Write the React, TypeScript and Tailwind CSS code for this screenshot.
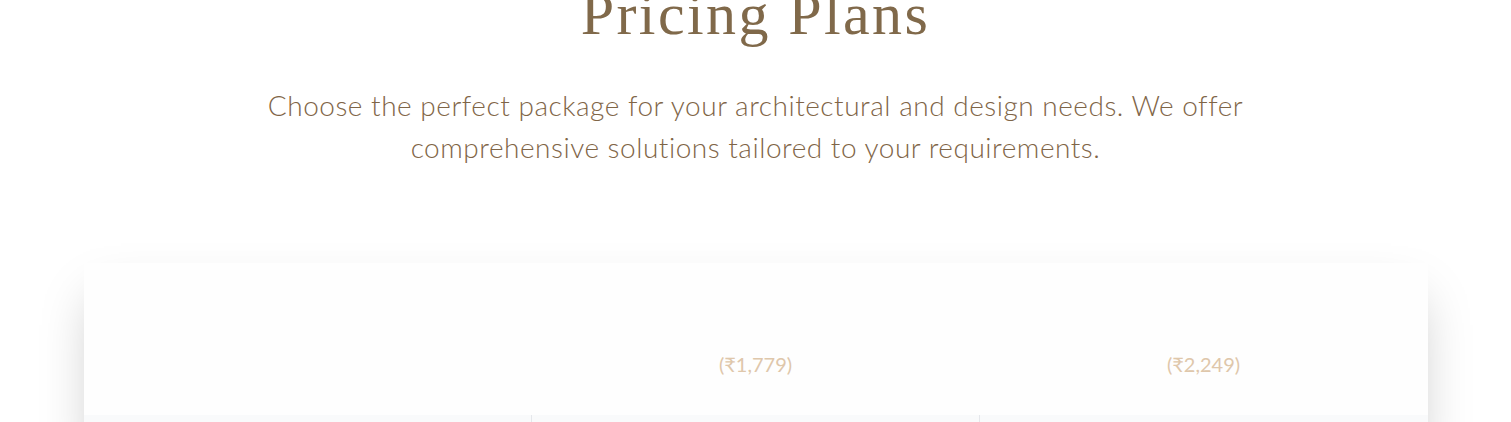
import React from 'react';

const plans = [
  { name: 'Basic', price: '' },
  { name: 'Standard', price: '(₹1,779)' },
  { name: 'Premium', price: '(₹2,249)' },
];

export default function App() {
  return (
    <div className="min-h-[422px] w-full overflow-hidden bg-white">
      <section className="flex flex-col items-center">
        <h1
          className="mt-[-22px] text-[60px] leading-[1.2] tracking-[0.04em] text-[#80694a]"
          style={{ fontFamily: '"Liberation Serif", serif' }}
        >
          Pricing Plans
        </h1>
        <p
          className="mt-[34px] text-center text-[28px] font-light leading-[42px] tracking-[0.52px] text-[#7f6547]"
          style={{ fontFamily: 'Lato, "Open Sans", sans-serif' }}
        >
          Choose the perfect package for your architectural and design needs. We offer
          <br />
          comprehensive solutions tailored to your requirements.
        </p>
      </section>

      <div className="mx-auto mt-[95px] w-[1344px] bg-[#fefefe] shadow-2xl">
        <div className="grid h-[152px] grid-cols-3">
          {plans.map((p) => (
            <div key={p.name} className="flex items-end justify-center pb-[37px]">
              <span
                className="text-[20px] leading-[28px] text-[#dfc7ab]"
                style={{ fontFamily: 'Lato, "Open Sans", sans-serif' }}
              >
                {p.price}
              </span>
            </div>
          ))}
        </div>
        <div className="grid h-[40px] grid-cols-3 bg-[#f9fafb]">
          <div className="border-r border-gray-200" />
          <div className="border-r border-gray-200" />
          <div />
        </div>
      </div>
    </div>
  );
}
